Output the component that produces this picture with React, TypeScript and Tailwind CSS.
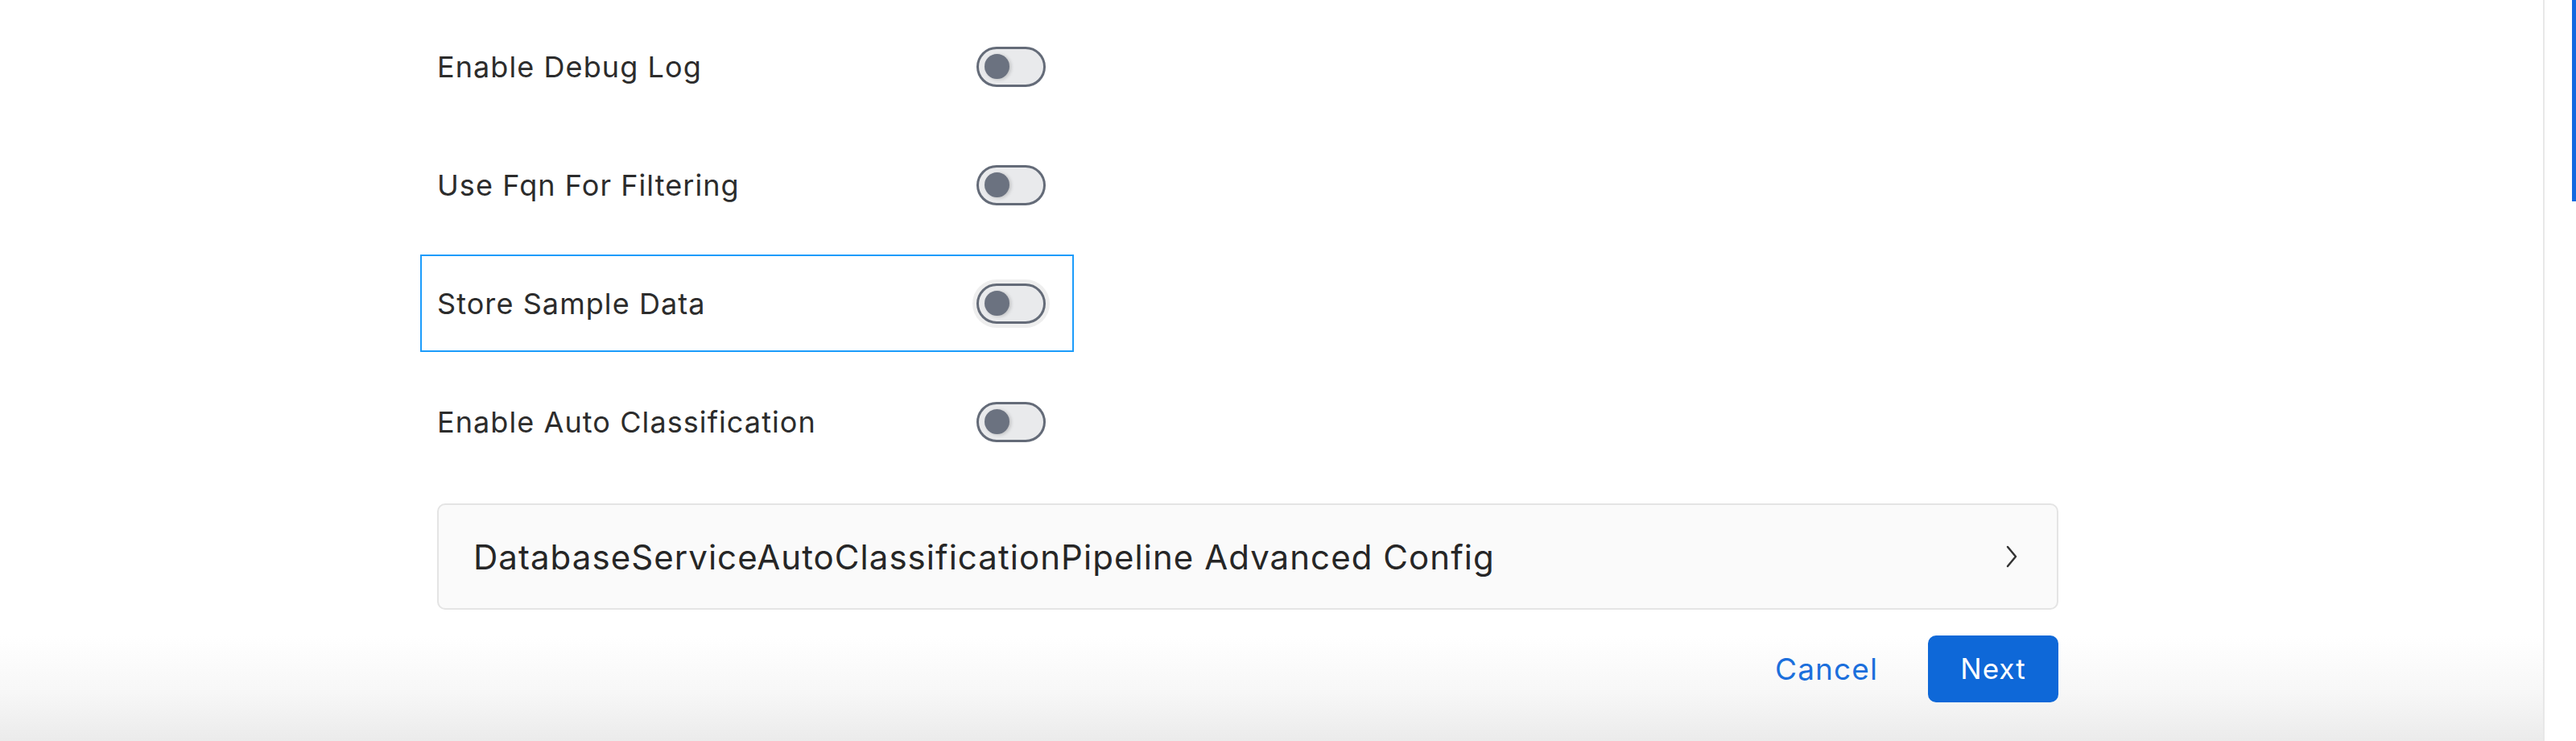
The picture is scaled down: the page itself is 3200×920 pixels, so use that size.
const rows = [
  { label: "Enable Debug Log", focused: false },
  { label: "Use Fqn For Filtering", focused: false },
  { label: "Store Sample Data", focused: true },
  { label: "Enable Auto Classification", focused: false },
];

const Toggle = ({ focused }: { focused: boolean }) => (
  <div
    className={`flex h-[50px] w-[86px] items-center rounded-full border-[3px] border-[#646b78] bg-[#e9eaec] pl-[7px] ${focused ? "shadow-[0_0_0_5px_#eeeeee]" : ""}`}
  >
    <div className="h-[31px] w-[31px] rounded-full bg-[#6b7280] shadow-[2px_1px_4px_rgba(0,0,0,0.18)]" />
  </div>
);

export default function App() {
  return (
    <div className="flex h-[920px] w-[3200px] overflow-hidden bg-white font-['Inter',sans-serif]">
      <div className="h-full w-[3159px] bg-[linear-gradient(to_bottom,#ffffff_790px,#f7f7f7_860px,#ebebeb_920px)]">
        <div className="ml-[522px] flex w-[2035px] flex-col pt-[22px]">
          <div className="flex flex-col gap-[26px]">
            {rows.map((row) => (
              <div
                key={row.label}
                className={`flex h-[121px] w-[812px] items-center border-2 pl-[19px] ${row.focused ? "border-[#1c9cfb]" : "border-transparent"}`}
              >
                <span className="w-[670px] text-[36px] tracking-[0.03em] text-[#2c2c2c]">{row.label}</span>
                <Toggle focused={row.focused} />
              </div>
            ))}
          </div>

          <div className="ml-[21px] mt-[41px] flex h-[132px] w-[2014px] items-center justify-between rounded-[10px] border-2 border-[#e4e4e4] bg-[#fafafa] pl-[43px] pr-[46px]">
            <span className="text-[42px] tracking-[0.025em] text-[#262626]">
              DatabaseServiceAutoClassificationPipeline Advanced Config
            </span>
            <svg width="20" height="30" viewBox="0 0 20 30" fill="none" className="text-[#333333]">
              <polyline points="5,3 15,15 5,27" stroke="currentColor" strokeWidth="2.5" strokeLinecap="round" strokeLinejoin="round" />
            </svg>
          </div>

          <div className="ml-[21px] mt-[32px] flex w-[2014px] items-center justify-end">
            <button className="mr-[62px] text-[37px] tracking-[0.03em] text-[#1b6fdc]">Cancel</button>
            <button className="flex h-[83px] w-[162px] items-center justify-center rounded-[10px] bg-[#0e68d8] text-[35px] tracking-[0.03em] text-white">
              Next
            </button>
          </div>
        </div>
      </div>
      <div className="h-full w-[2px] bg-[#e8e8e8]" />
      <div className="flex h-full flex-1 justify-end">
        <div className="h-[250px] w-[5px] bg-[#1369e0]" />
      </div>
    </div>
  );
}
